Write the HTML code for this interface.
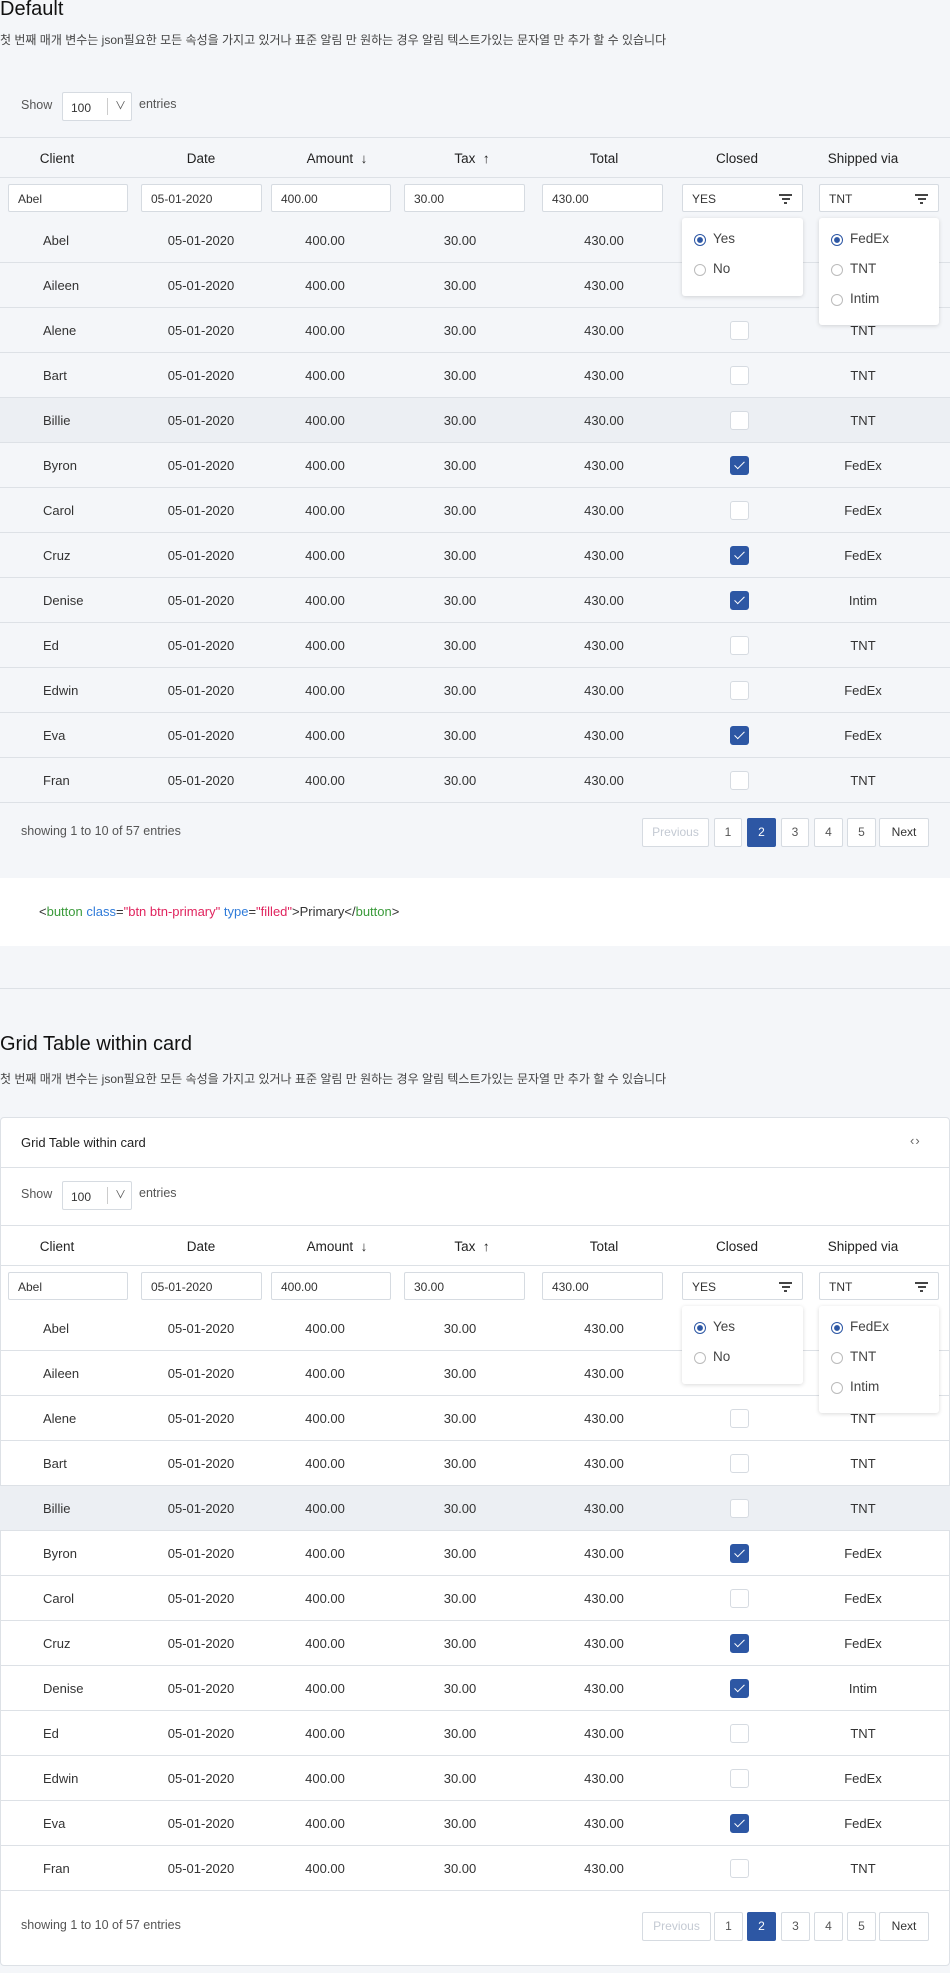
<!DOCTYPE html>
<html><head><meta charset="utf-8"><style>
*{box-sizing:border-box;margin:0;padding:0}
body{width:950px;height:1973px;background:#f4f6f9;font-family:"Liberation Sans","Noto Sans CJK KR",sans-serif;color:#333;position:relative;overflow:hidden;font-size:13px}
.a{position:absolute}
h1{position:absolute;left:0;font-size:20px;font-weight:normal;color:#111}
.sub{position:absolute;left:0;font-size:12px;color:#444}
.tb{position:absolute;left:0;width:950px;height:730px}
.hd{position:absolute;left:0;top:0;width:950px;height:41px;border-top:1px solid #dde1e6;border-bottom:1px solid #dde1e6}
.hd span{position:absolute;top:13px;font-size:13.5px;color:#222;width:140px;text-align:center}
.in{position:absolute;top:47px;height:28px;border:1px solid #d6dbe1;background:#fff;border-radius:2px;font-size:12px;padding:7px 9px;color:#333}
.r{position:absolute;left:0;width:950px;height:45px;border-bottom:1px solid #dde1e6}
.r span{position:absolute;top:15px;width:120px;text-align:center;color:#333}
.r span.c0{text-align:left;left:43px}
.c1{left:141px}.c2{left:265px}.c3{left:400px}.c4{left:544px}.c6{left:803px}
.cb{position:absolute;left:730px;top:13px;width:19px;height:19px;border:1px solid #d6dbe1;border-radius:3px;background:#fff}
.cb.on{background:#2d57a4;border-color:#2d57a4}
.cb.on:after{content:"";position:absolute;left:6px;top:2px;width:4px;height:9px;border:solid #fff;border-width:0 1.5px 1.5px 0;transform:rotate(45deg)}
.hl{background:#eceff3}
.pop{position:absolute;top:81px;background:#fff;border-radius:3px;box-shadow:0 1px 4px rgba(0,0,0,.15)}
.pop div{position:absolute;left:12px;font-size:13.5px;color:#444;padding-left:19px}
.pop div:before{content:"";position:absolute;left:0;top:3px;width:12px;height:12px;border:1.5px solid #bbb;border-radius:50%;box-sizing:border-box}
.pop div.on:before{border-color:#2d57a4;background:radial-gradient(circle,#2d57a4 0,#2d57a4 2.6px,#fff 3.2px)}
.fi{position:absolute;right:10px;top:9px;width:13px}
.fi i{display:block;height:1.5px;background:#444;margin:0 auto 2.5px}
.pg{position:absolute;top:681px;height:29px;border:1px solid #d6dbe1;background:#fff;border-radius:2px;font-size:12px;color:#555;text-align:center;line-height:27px}
.foot{position:absolute;left:21px;top:687px;font-size:12.5px;color:#555}
.sel{position:absolute;left:62px;width:70px;height:29px;border:1px solid #d6dbe1;background:#fff;border-radius:2px;font-size:12px}
</style></head><body>

<h1 style="top:-2px">Default</h1>
<div class="sub" style="top:31px">첫 번째 매개 변수는 json필요한 모든 속성을 가지고 있거나 표준 알림 만 원하는 경우 알림 텍스트가있는 문자열 만 추가 할 수 있습니다</div>
<div class="a" style="left:21px;top:98px;font-size:12.5px;color:#555">Show</div>
<div class="sel" style="top:92px"><span class="a" style="left:8px;top:8px">100</span><span class="a" style="left:44px;top:5px;height:17px;border-left:1px solid #ccc"></span><span class="a" style="left:52px;top:4px;font-size:11px;color:#555">&#x2228;</span></div>
<div class="a" style="left:139px;top:97px;font-size:12.5px;color:#555">entries</div>

<div class="tb" style="top:137px">
<div class="hd"><span style="left:-13px">Client</span><span style="left:131px">Date</span><span style="left:267px">Amount &nbsp;↓</span><span style="left:402px">Tax &nbsp;↑</span><span style="left:534px">Total</span><span style="left:667px">Closed</span><span style="left:793px">Shipped via</span></div>
<div class="in" style="left:8px;width:120px">Abel</div><div class="in" style="left:141px;width:121px">05-01-2020</div><div class="in" style="left:271px;width:120px">400.00</div><div class="in" style="left:404px;width:121px">30.00</div><div class="in" style="left:542px;width:121px">430.00</div>
<div class="in" style="left:682px;width:121px">YES<div class="fi"><i style="width:13px"></i><i style="width:8px"></i><i style="width:3px"></i></div></div>
<div class="in" style="left:819px;width:120px">TNT<div class="fi"><i style="width:13px"></i><i style="width:8px"></i><i style="width:3px"></i></div></div>
<div class="r" style="top:81px"><span class="c0">Abel</span><span class="c1">05-01-2020</span><span class="c2">400.00</span><span class="c3">30.00</span><span class="c4">430.00</span></div>
<div class="r" style="top:126px"><span class="c0">Aileen</span><span class="c1">05-01-2020</span><span class="c2">400.00</span><span class="c3">30.00</span><span class="c4">430.00</span></div>
<div class="r" style="top:171px"><span class="c0">Alene</span><span class="c1">05-01-2020</span><span class="c2">400.00</span><span class="c3">30.00</span><span class="c4">430.00</span><i class="cb"></i><span class="c6">TNT</span></div>
<div class="r" style="top:216px"><span class="c0">Bart</span><span class="c1">05-01-2020</span><span class="c2">400.00</span><span class="c3">30.00</span><span class="c4">430.00</span><i class="cb"></i><span class="c6">TNT</span></div>
<div class="r hl" style="top:261px"><span class="c0">Billie</span><span class="c1">05-01-2020</span><span class="c2">400.00</span><span class="c3">30.00</span><span class="c4">430.00</span><i class="cb"></i><span class="c6">TNT</span></div>
<div class="r" style="top:306px"><span class="c0">Byron</span><span class="c1">05-01-2020</span><span class="c2">400.00</span><span class="c3">30.00</span><span class="c4">430.00</span><i class="cb on"></i><span class="c6">FedEx</span></div>
<div class="r" style="top:351px"><span class="c0">Carol</span><span class="c1">05-01-2020</span><span class="c2">400.00</span><span class="c3">30.00</span><span class="c4">430.00</span><i class="cb"></i><span class="c6">FedEx</span></div>
<div class="r" style="top:396px"><span class="c0">Cruz</span><span class="c1">05-01-2020</span><span class="c2">400.00</span><span class="c3">30.00</span><span class="c4">430.00</span><i class="cb on"></i><span class="c6">FedEx</span></div>
<div class="r" style="top:441px"><span class="c0">Denise</span><span class="c1">05-01-2020</span><span class="c2">400.00</span><span class="c3">30.00</span><span class="c4">430.00</span><i class="cb on"></i><span class="c6">Intim</span></div>
<div class="r" style="top:486px"><span class="c0">Ed</span><span class="c1">05-01-2020</span><span class="c2">400.00</span><span class="c3">30.00</span><span class="c4">430.00</span><i class="cb"></i><span class="c6">TNT</span></div>
<div class="r" style="top:531px"><span class="c0">Edwin</span><span class="c1">05-01-2020</span><span class="c2">400.00</span><span class="c3">30.00</span><span class="c4">430.00</span><i class="cb"></i><span class="c6">FedEx</span></div>
<div class="r" style="top:576px"><span class="c0">Eva</span><span class="c1">05-01-2020</span><span class="c2">400.00</span><span class="c3">30.00</span><span class="c4">430.00</span><i class="cb on"></i><span class="c6">FedEx</span></div>
<div class="r" style="top:621px"><span class="c0">Fran</span><span class="c1">05-01-2020</span><span class="c2">400.00</span><span class="c3">30.00</span><span class="c4">430.00</span><i class="cb"></i><span class="c6">TNT</span></div>
<div class="pop" style="left:682px;width:121px;height:78px"><div class="on" style="top:13px">Yes</div><div style="top:43px">No</div></div>
<div class="pop" style="left:819px;width:120px;height:107px"><div class="on" style="top:13px">FedEx</div><div style="top:43px">TNT</div><div style="top:73px">Intim</div></div>
<div class="foot">showing 1 to 10 of 57 entries</div>
<div class="pg" style="left:642px;width:67px;color:#c4cad3">Previous</div><div class="pg" style="left:714px;width:28px">1</div><div class="pg" style="left:747px;width:29px;background:#2d57a4;border-color:#2d57a4;color:#fff">2</div><div class="pg" style="left:781px;width:28px">3</div><div class="pg" style="left:814px;width:29px">4</div><div class="pg" style="left:847px;width:29px">5</div><div class="pg" style="left:879px;width:50px;color:#333">Next</div>
</div>

<div class="a" style="left:0;top:878px;width:950px;height:68px;background:#fff"></div>
<div class="a" style="left:39px;top:904px;font-size:13px;font-family:'Liberation Sans',sans-serif"><span style="color:#333">&lt;</span><span style="color:#3a9a3a">button</span> <span style="color:#2f7bd9">class</span>=<span style="color:#e0245e">"btn btn-primary"</span> <span style="color:#2f7bd9">type</span>=<span style="color:#e0245e">"filled"</span>&gt;Primary&lt;/<span style="color:#3a9a3a">button</span>&gt;</div>
<div class="a" style="left:0;top:988px;width:950px;border-top:1px solid #dde1e6"></div>

<h1 style="top:1033px">Grid Table within card</h1>
<div class="sub" style="top:1070px">첫 번째 매개 변수는 json필요한 모든 속성을 가지고 있거나 표준 알림 만 원하는 경우 알림 텍스트가있는 문자열 만 추가 할 수 있습니다</div>
<div class="a" style="left:0;top:1117px;width:950px;height:849px;background:#fff;border:1px solid #dde1e6;border-radius:4px"></div>
<div class="a" style="left:0;top:1167px;width:950px;border-top:1px solid #dde1e6"></div>
<div class="a" style="left:21px;top:1135px;font-size:13px;color:#222">Grid Table within card</div>
<div class="a" style="left:910px;top:1133px;font-size:13px;color:#666;letter-spacing:1px">&lsaquo;&rsaquo;</div>
<div class="a" style="left:21px;top:1187px;font-size:12.5px;color:#555">Show</div>
<div class="sel" style="top:1181px"><span class="a" style="left:8px;top:8px">100</span><span class="a" style="left:44px;top:5px;height:17px;border-left:1px solid #ccc"></span><span class="a" style="left:52px;top:4px;font-size:11px;color:#555">&#x2228;</span></div>
<div class="a" style="left:139px;top:1186px;font-size:12.5px;color:#555">entries</div>

<div class="tb" style="top:1225px">
<div class="hd"><span style="left:-13px">Client</span><span style="left:131px">Date</span><span style="left:267px">Amount &nbsp;↓</span><span style="left:402px">Tax &nbsp;↑</span><span style="left:534px">Total</span><span style="left:667px">Closed</span><span style="left:793px">Shipped via</span></div>
<div class="in" style="left:8px;width:120px">Abel</div><div class="in" style="left:141px;width:121px">05-01-2020</div><div class="in" style="left:271px;width:120px">400.00</div><div class="in" style="left:404px;width:121px">30.00</div><div class="in" style="left:542px;width:121px">430.00</div>
<div class="in" style="left:682px;width:121px">YES<div class="fi"><i style="width:13px"></i><i style="width:8px"></i><i style="width:3px"></i></div></div>
<div class="in" style="left:819px;width:120px">TNT<div class="fi"><i style="width:13px"></i><i style="width:8px"></i><i style="width:3px"></i></div></div>
<div class="r" style="top:81px"><span class="c0">Abel</span><span class="c1">05-01-2020</span><span class="c2">400.00</span><span class="c3">30.00</span><span class="c4">430.00</span></div>
<div class="r" style="top:126px"><span class="c0">Aileen</span><span class="c1">05-01-2020</span><span class="c2">400.00</span><span class="c3">30.00</span><span class="c4">430.00</span></div>
<div class="r" style="top:171px"><span class="c0">Alene</span><span class="c1">05-01-2020</span><span class="c2">400.00</span><span class="c3">30.00</span><span class="c4">430.00</span><i class="cb"></i><span class="c6">TNT</span></div>
<div class="r" style="top:216px"><span class="c0">Bart</span><span class="c1">05-01-2020</span><span class="c2">400.00</span><span class="c3">30.00</span><span class="c4">430.00</span><i class="cb"></i><span class="c6">TNT</span></div>
<div class="r hl" style="top:261px"><span class="c0">Billie</span><span class="c1">05-01-2020</span><span class="c2">400.00</span><span class="c3">30.00</span><span class="c4">430.00</span><i class="cb"></i><span class="c6">TNT</span></div>
<div class="r" style="top:306px"><span class="c0">Byron</span><span class="c1">05-01-2020</span><span class="c2">400.00</span><span class="c3">30.00</span><span class="c4">430.00</span><i class="cb on"></i><span class="c6">FedEx</span></div>
<div class="r" style="top:351px"><span class="c0">Carol</span><span class="c1">05-01-2020</span><span class="c2">400.00</span><span class="c3">30.00</span><span class="c4">430.00</span><i class="cb"></i><span class="c6">FedEx</span></div>
<div class="r" style="top:396px"><span class="c0">Cruz</span><span class="c1">05-01-2020</span><span class="c2">400.00</span><span class="c3">30.00</span><span class="c4">430.00</span><i class="cb on"></i><span class="c6">FedEx</span></div>
<div class="r" style="top:441px"><span class="c0">Denise</span><span class="c1">05-01-2020</span><span class="c2">400.00</span><span class="c3">30.00</span><span class="c4">430.00</span><i class="cb on"></i><span class="c6">Intim</span></div>
<div class="r" style="top:486px"><span class="c0">Ed</span><span class="c1">05-01-2020</span><span class="c2">400.00</span><span class="c3">30.00</span><span class="c4">430.00</span><i class="cb"></i><span class="c6">TNT</span></div>
<div class="r" style="top:531px"><span class="c0">Edwin</span><span class="c1">05-01-2020</span><span class="c2">400.00</span><span class="c3">30.00</span><span class="c4">430.00</span><i class="cb"></i><span class="c6">FedEx</span></div>
<div class="r" style="top:576px"><span class="c0">Eva</span><span class="c1">05-01-2020</span><span class="c2">400.00</span><span class="c3">30.00</span><span class="c4">430.00</span><i class="cb on"></i><span class="c6">FedEx</span></div>
<div class="r" style="top:621px"><span class="c0">Fran</span><span class="c1">05-01-2020</span><span class="c2">400.00</span><span class="c3">30.00</span><span class="c4">430.00</span><i class="cb"></i><span class="c6">TNT</span></div>
<div class="pop" style="left:682px;width:121px;height:78px"><div class="on" style="top:13px">Yes</div><div style="top:43px">No</div></div>
<div class="pop" style="left:819px;width:120px;height:107px"><div class="on" style="top:13px">FedEx</div><div style="top:43px">TNT</div><div style="top:73px">Intim</div></div>
<div class="foot" style="top:693px">showing 1 to 10 of 57 entries</div>
<div style="position:absolute;left:0;top:6px;width:950px;height:730px">
<div class="pg" style="left:642px;width:69px;color:#c4cad3">Previous</div><div class="pg" style="left:714px;width:29px">1</div><div class="pg" style="left:747px;width:29px;background:#2d57a4;border-color:#2d57a4;color:#fff">2</div><div class="pg" style="left:781px;width:29px">3</div><div class="pg" style="left:814px;width:29px">4</div><div class="pg" style="left:847px;width:29px">5</div><div class="pg" style="left:879px;width:50px;color:#333">Next</div>
</div>
</div>
</body></html>
